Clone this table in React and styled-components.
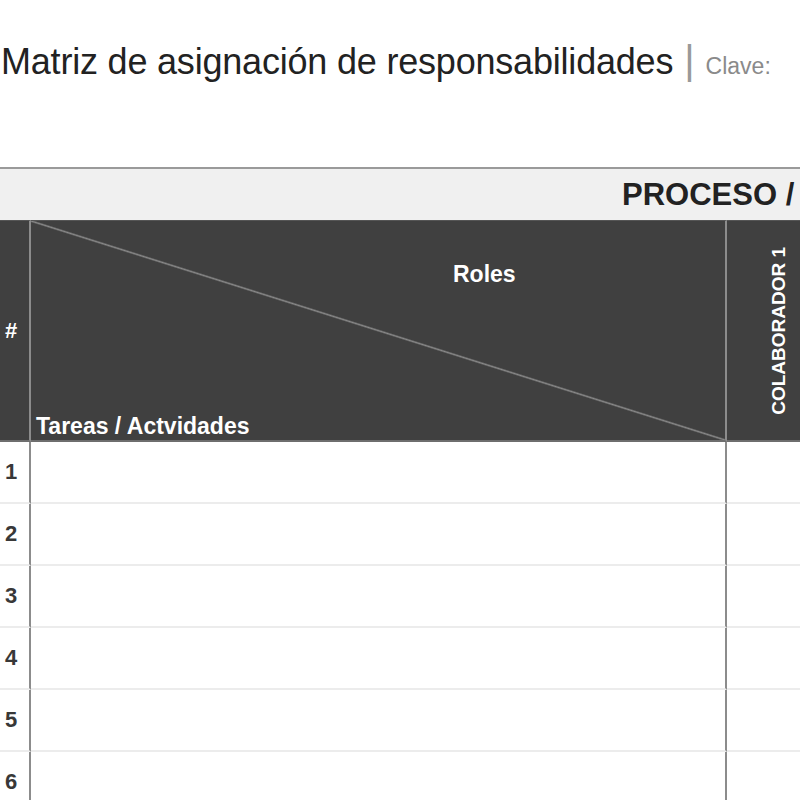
import React from 'react';
import styled, { createGlobalStyle } from 'styled-components';

const GlobalStyle = createGlobalStyle`
  body {
    margin: 0;
    background: #ffffff;
    font-family: "Liberation Sans", Arial, sans-serif;
  }
`;

const Page = styled.div`
  width: 800px;
  height: 800px;
  overflow: hidden;
  background: #ffffff;
`;

const TitleBar = styled.div`
  display: flex;
  align-items: baseline;
  gap: 11px;
  padding: 38px 0 0 1px;
  height: 167px;
  box-sizing: border-box;
  white-space: nowrap;
`;

const Title = styled.h1`
  margin: 0;
  font-size: 36px;
  font-weight: 400;
  color: #222;
  letter-spacing: -0.2px;
`;

const Divider = styled.span`
  font-size: 40px;
  color: #999;
  font-weight: 300;
`;

const Key = styled.span`
  font-size: 23px;
  color: #8a8a8a;
`;

const Table = styled.div`
  width: 833px;
`;

const Band = styled.div`
  height: 53px;
  box-sizing: border-box;
  border-top: 2px solid #9a9a9a;
  background: #f0f0f0;
  display: flex;
  align-items: center;
  padding-left: 622px;
  font-size: 31px;
  font-weight: 700;
  color: #222;
  white-space: nowrap;
`;

const Grid = styled.div`
  display: grid;
  grid-template-columns: 31px 696px 106px;
`;

const HeadCell = styled.div`
  height: 222px;
  box-sizing: border-box;
  background: #404040;
  border-top: 1px solid #555;
  border-right: 2px solid #8c8c8c;
  border-bottom: 2px solid #6e6e6e;
  color: #fff;
  font-weight: 700;
  display: flex;
  align-items: center;
  justify-content: center;
`;

const NumHead = styled(HeadCell)`
  font-size: 22px;
  justify-content: flex-start;
  padding-left: 5px;
`;

const DiagonalHead = styled(HeadCell)`
  flex-direction: column;
  align-items: stretch;
  justify-content: space-between;
  padding: 40px 0 0 5px;
  font-size: 23px;
  background: linear-gradient(
    to top right,
    #404040 calc(50% - 1.5px),
    #8a8a8a 50%,
    #404040 calc(50% + 1.5px)
  );
`;

const Roles = styled.span`
  padding-left: 417px;
`;

const RoleHead = styled(HeadCell)`
  font-size: 19px;
`;

const Vertical = styled.span`
  writing-mode: vertical-rl;
  transform: rotate(180deg);
  white-space: nowrap;
`;

const Cell = styled.div`
  height: 62px;
  box-sizing: border-box;
  border-right: 2px solid #8c8c8c;
  border-bottom: 2px solid #ececec;
  display: flex;
  align-items: center;
  font-size: 22px;
  font-weight: 700;
  color: #383838;
  padding-left: ${(p) => (p.$num ? '5px' : '0')};
`;

const roles = ['COLABORADOR 1'];
const rows = [1, 2, 3, 4, 5, 6];

export default function App() {
  return (
    <Page>
      <GlobalStyle />
      <TitleBar>
        <Title>Matriz de asignación de responsabilidades</Title>
        <Divider>|</Divider>
        <Key>Clave:</Key>
      </TitleBar>
      <Table>
        <Band>PROCESO /</Band>
        <Grid>
          <NumHead>#</NumHead>
          <DiagonalHead>
            <Roles>Roles</Roles>
            <span>Tareas / Actvidades</span>
          </DiagonalHead>
          {roles.map((r) => (
            <RoleHead key={r}>
              <Vertical>{r}</Vertical>
            </RoleHead>
          ))}
          {rows.map((n) => (
            <React.Fragment key={n}>
              <Cell $num>{n}</Cell>
              <Cell />
              {roles.map((r) => (
                <Cell key={r} />
              ))}
            </React.Fragment>
          ))}
        </Grid>
      </Table>
    </Page>
  );
}
